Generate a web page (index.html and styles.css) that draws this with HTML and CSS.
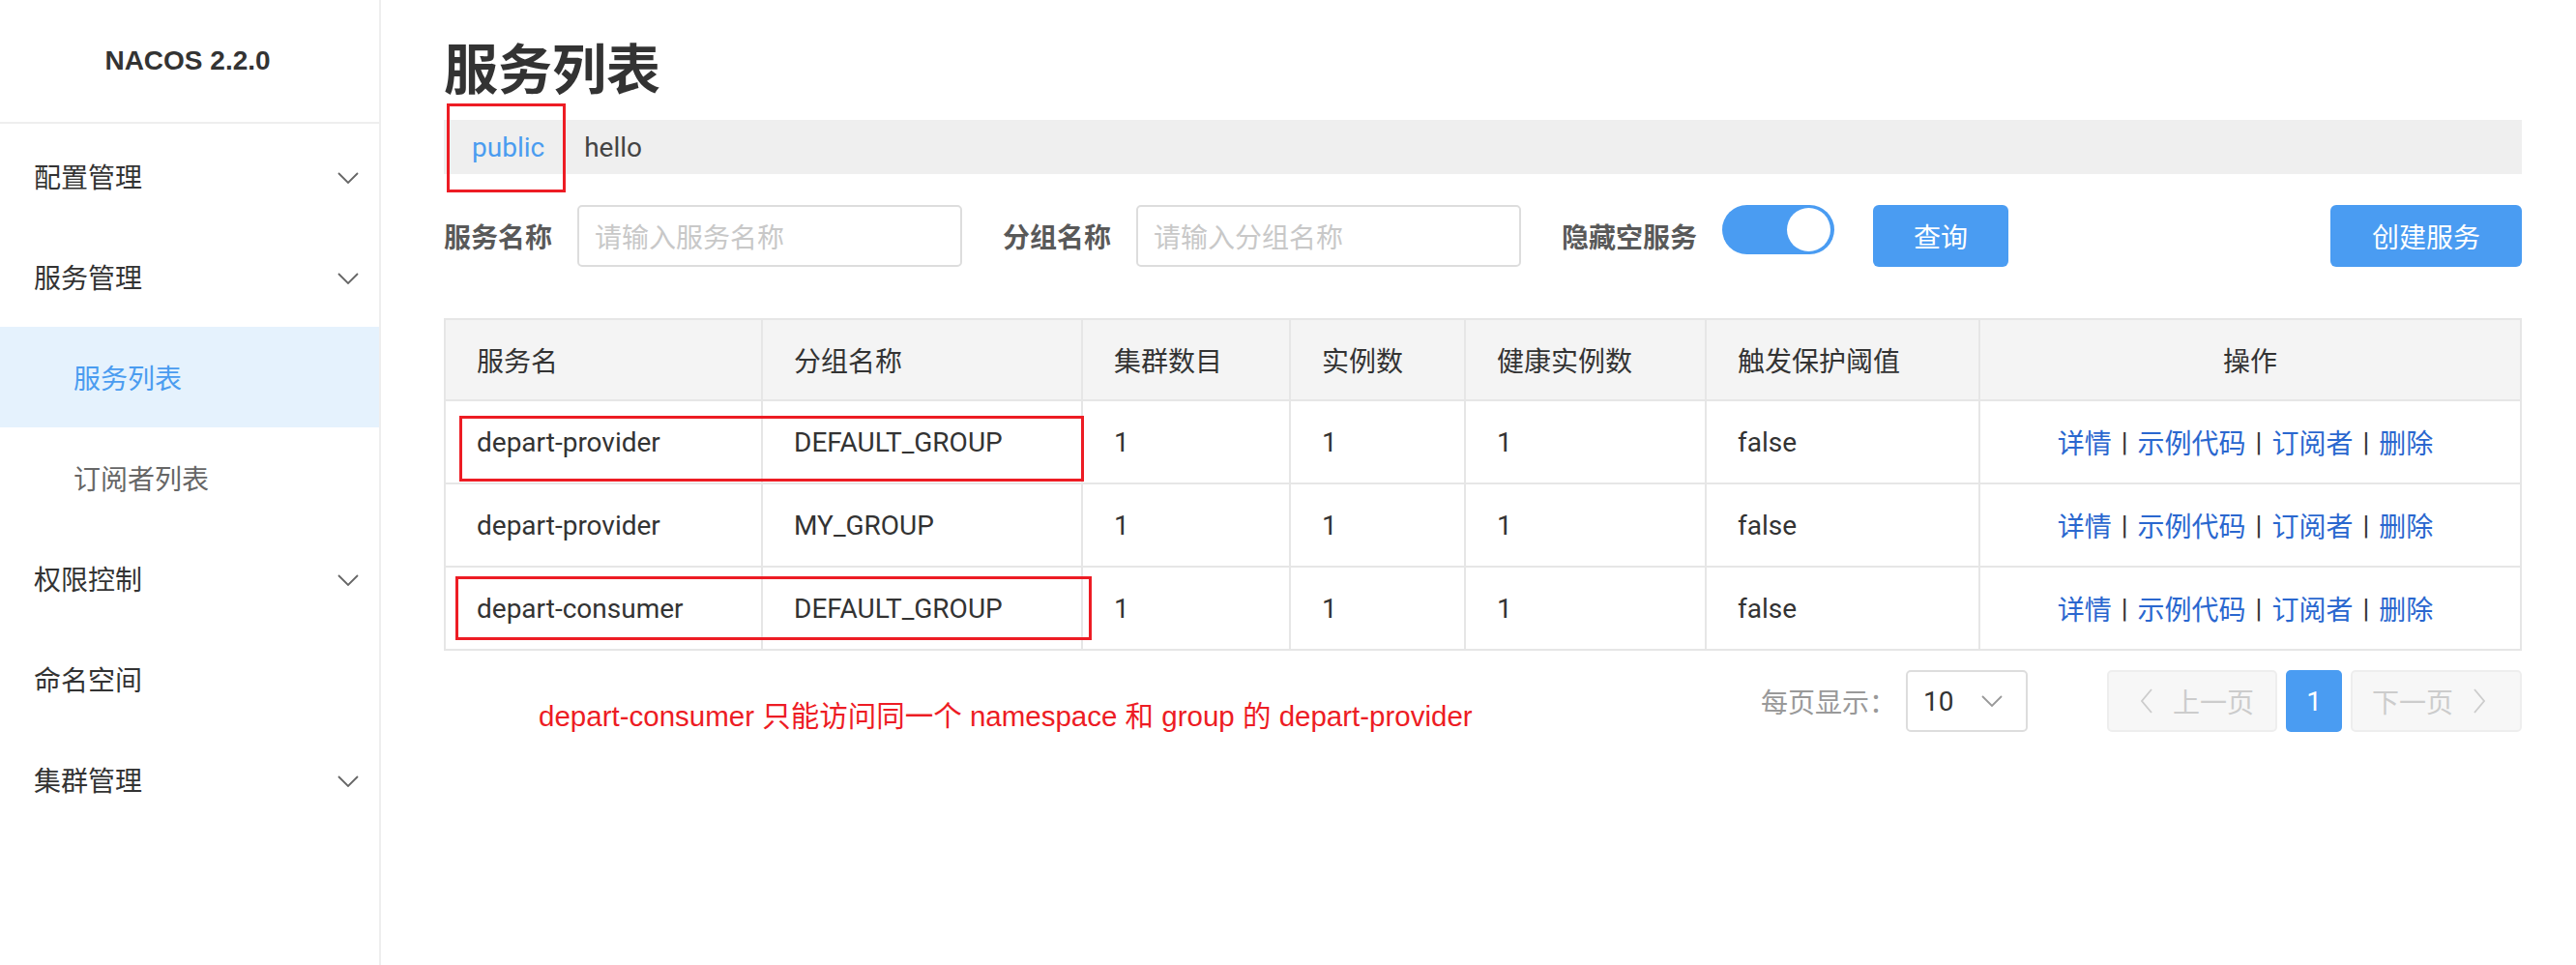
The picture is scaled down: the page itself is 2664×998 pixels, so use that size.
FILE: index.html
```html
<!DOCTYPE html>
<html lang="zh-CN">
<head>
<meta charset="utf-8">
<title>Nacos - 服务列表</title>
<link rel="stylesheet" href="styles.css">
</head>
<body>
<div class="app">
  <aside class="sidebar">
    <div class="brand">NACOS 2.2.0</div>
    <nav class="menu">
      <div class="menu-item"><span>配置管理</span><svg class="chev" viewBox="0 0 22 12"><polyline points="1,1 11,11 21,1"/></svg></div>
      <div class="menu-item"><span>服务管理</span><svg class="chev" viewBox="0 0 22 12"><polyline points="1,1 11,11 21,1"/></svg></div>
      <div class="menu-item sub active"><span>服务列表</span></div>
      <div class="menu-item sub"><span>订阅者列表</span></div>
      <div class="menu-item"><span>权限控制</span><svg class="chev" viewBox="0 0 22 12"><polyline points="1,1 11,11 21,1"/></svg></div>
      <div class="menu-item"><span>命名空间</span></div>
      <div class="menu-item"><span>集群管理</span><svg class="chev" viewBox="0 0 22 12"><polyline points="1,1 11,11 21,1"/></svg></div>
    </nav>
  </aside>
  <main class="main">
    <h1 class="title">服务列表</h1>
    <div class="ns-bar">
      <span class="ns ns-active">public</span>
      <span class="ns-sep"></span>
      <span class="ns">hello</span>
      <span class="mark mark-ns"></span>
    </div>
    <div class="filters">
      <label class="f-label">服务名称</label>
      <div class="input"><span class="ph">请输入服务名称</span></div>
      <label class="f-label gap-l">分组名称</label>
      <div class="input"><span class="ph">请输入分组名称</span></div>
      <label class="f-label gap-l">隐藏空服务</label>
      <div class="toggle"><span class="knob"></span></div>
      <button class="btn btn-query">查询</button>
      <button class="btn btn-create">创建服务</button>
    </div>
    <div class="table-wrap">
      <div class="grid">
        <div class="th">服务名</div>
        <div class="th">分组名称</div>
        <div class="th">集群数目</div>
        <div class="th">实例数</div>
        <div class="th">健康实例数</div>
        <div class="th">触发保护阈值</div>
        <div class="th center">操作</div>

        <div class="td">depart-provider</div>
        <div class="td">DEFAULT_GROUP</div>
        <div class="td">1</div>
        <div class="td">1</div>
        <div class="td">1</div>
        <div class="td">false</div>
        <div class="td center ops"><a>详情</a><span class="sep">|</span><a>示例代码</a><span class="sep">|</span><a>订阅者</a><span class="sep">|</span><a>删除</a></div>

        <div class="td">depart-provider</div>
        <div class="td">MY_GROUP</div>
        <div class="td">1</div>
        <div class="td">1</div>
        <div class="td">1</div>
        <div class="td">false</div>
        <div class="td center ops"><a>详情</a><span class="sep">|</span><a>示例代码</a><span class="sep">|</span><a>订阅者</a><span class="sep">|</span><a>删除</a></div>

        <div class="td">depart-consumer</div>
        <div class="td">DEFAULT_GROUP</div>
        <div class="td">1</div>
        <div class="td">1</div>
        <div class="td">1</div>
        <div class="td">false</div>
        <div class="td center ops"><a>详情</a><span class="sep">|</span><a>示例代码</a><span class="sep">|</span><a>订阅者</a><span class="sep">|</span><a>删除</a></div>
      </div>
      <span class="mark mark-r1"></span>
      <span class="mark mark-r3"></span>
    </div>
    <div class="footer">
      <div class="note">depart-consumer 只能访问同一个 namespace 和 group 的 depart-provider</div>
      <span class="ps-label">每页显示：</span>
      <div class="select"><span>10</span><svg class="sel-chev" viewBox="0 0 22 12"><polyline points="1,1 11,11 21,1"/></svg></div>
      <div class="pager">
        <div class="pg pg-prev"><svg class="pg-chev" viewBox="0 0 12 26"><polyline points="11,1 1,13 11,25"/></svg><span>上一页</span></div>
        <div class="pg-num">1</div>
        <div class="pg pg-next"><span>下一页</span><svg class="pg-chev" viewBox="0 0 12 26"><polyline points="1,1 11,13 1,25"/></svg></div>
      </div>
    </div>
  </main>
</div>
</body>
</html>
```

FILE: styles.css
```css
* { box-sizing: border-box; }
html, body { margin: 0; padding: 0; background: #fff; }
body {
  font-family: Roboto, "Noto Sans CJK SC", sans-serif;
  font-size: 28px;
  color: #333;
  overflow: hidden;
}
.app { display: flex; width: 2664px; height: 998px; }

/* sidebar */
.sidebar {
  width: 394px;
  flex: none;
  border-right: 2px solid #eeeeee;
  height: 998px;
}
.brand {
  height: 128px;
  line-height: 126px;
  border-bottom: 2px solid #eeeeee;
  text-align: center;
  padding-right: 4px;
  font-family: "Liberation Sans", "Noto Sans CJK SC", sans-serif;
  font-weight: bold;
  font-size: 28px;
  color: #333;
}
.menu { padding-top: 2px; }
.menu-item {
  height: 104px;
  display: flex;
  align-items: center;
  justify-content: space-between;
  padding: 0 21px 0 35px;
  font-family: "Noto Sans CJK SC", sans-serif;
  font-size: 28px;
  color: #333;
}
.menu-item.sub { padding-left: 76px; color: #666; }
.menu-item.active { background: #e5f2fd; color: #4a9cf0; }
.chev { width: 22px; height: 12px; margin-top: 4px; }
.chev polyline, .sel-chev polyline, .pg-chev polyline {
  fill: none;
  stroke: #666;
  stroke-width: 1.8;
}

/* main */
.main {
  flex: 1;
  padding: 40px 56px 0 65px;
  min-width: 0;
}
.title {
  margin: 0;
  height: 56px;
  line-height: 56px;
  font-size: 56px;
  font-weight: bold;
  font-family: "Noto Sans CJK SC", sans-serif;
  color: #333;
}
.ns-bar {
  position: relative;
  margin-top: 28px;
  height: 56px;
  background: #efefef;
  display: flex;
  align-items: center;
  padding-left: 29px;
}
.ns { font-size: 28px; color: #444; }
.ns-active { color: #4a9cf0; }
.ns-sep {
  width: 2px;
  height: 24px;
  background: #777;
  margin: 0 20px 0 19px;
}
.mark {
  position: absolute;
  border: 3px solid #ed1c24;
}
.mark-ns { left: 3px; top: -17px; width: 123px; height: 92px; }

.filters {
  margin-top: 32px;
  height: 64px;
  display: flex;
  align-items: center;
}
.f-label {
  font-family: "Noto Sans CJK SC", sans-serif;
  font-weight: bold;
  font-size: 28px;
  color: #595959;
  margin-right: 26px;
}
.gap-l { margin-left: 42px; }
.input {
  width: 398px;
  height: 64px;
  border: 2px solid #dddddd;
  border-radius: 5px;
  padding-left: 16px;
  display: flex;
  align-items: center;
}
.ph { color: #c8c8c8; font-size: 28px; font-family: "Noto Sans CJK SC", sans-serif; }
.toggle {
  align-self: flex-start;
  width: 116px;
  height: 51px;
  border-radius: 26px;
  background: #4a9cf2;
  display: flex;
  justify-content: flex-end;
  align-items: center;
  padding-right: 4px;
}
.knob { width: 45px; height: 45px; border-radius: 50%; background: #fff; }
.btn {
  height: 64px;
  border: none;
  border-radius: 6px;
  background: #4a9cf2;
  color: #fff;
  font-family: "Noto Sans CJK SC", sans-serif;
  font-size: 28px;
  padding: 0;
}
.btn-query { width: 140px; margin-left: 40px; }
.btn-create { width: 198px; margin-left: auto; }

/* table */
.table-wrap { position: relative; margin-top: 53px; }
.grid {
  display: grid;
  grid-template-columns: 328px 331px 215px 181px 249px 283px 1fr;
  border-top: 2px solid #e6e6e6;
  border-left: 2px solid #e6e6e6;
}
.th, .td {
  height: 84px;
  border-right: 2px solid #e6e6e6;
  border-bottom: 2px solid #e6e6e6;
  display: flex;
  align-items: center;
  padding-left: 32px;
  font-size: 28px;
  color: #333;
  white-space: nowrap;
}
.td { height: 86px; }
.th { background: #f4f4f4; font-family: "Noto Sans CJK SC", sans-serif; }
.center { justify-content: center; padding-left: 0; }
.ops { padding-right: 10px; }
.td a { color: #2a67cf; font-family: "Noto Sans CJK SC", sans-serif; }
.sep { color: #333; margin: 0 10px; font-family: Roboto, sans-serif; }
.mark-r1 { left: 16px; top: 101px; width: 646px; height: 68px; }
.mark-r3 { left: 12px; top: 267px; width: 658px; height: 66px; }

/* footer */
.footer {
  margin-top: 20px;
  height: 64px;
  display: flex;
  align-items: center;
}
.note {
  align-self: flex-start;
  margin: 33px 0 0 98px;
  line-height: 30px;
  font-family: "Liberation Sans", "Noto Sans CJK SC", sans-serif;
  font-size: 29.5px;
  color: #ed1c24;
  white-space: nowrap;
}
.ps-label {
  margin-left: auto;
  margin-right: 10px;
  color: #999;
  font-family: "Noto Sans CJK SC", sans-serif;
  font-size: 28px;
}
.select {
  width: 126px;
  height: 64px;
  border: 2px solid #dddddd;
  border-radius: 5px;
  display: flex;
  align-items: center;
  justify-content: space-between;
  padding: 0 24px 0 16px;
  color: #333;
}
.sel-chev { width: 22px; height: 12px; }
.sel-chev polyline { stroke: #999; }
.pager { display: flex; align-items: center; margin-left: 82px; gap: 9px; }
.pg {
  width: 176px;
  height: 64px;
  border: 2px solid #eeeeee;
  border-radius: 5px;
  background: #f7f7f7;
  display: flex;
  align-items: center;
  gap: 21px;
  color: #cccccc;
  font-family: "Noto Sans CJK SC", sans-serif;
  font-size: 28px;
}
.pg-prev { padding-left: 33px; }
.pg-next { width: 177px; padding-left: 20px; }
.pg-chev { width: 12px; height: 26px; }
.pg-chev polyline { stroke: #cccccc; }
.pg-num {
  width: 58px;
  height: 64px;
  border-radius: 5px;
  background: #4a9cf2;
  color: #fff;
  display: flex;
  align-items: center;
  justify-content: center;
  font-size: 28px;
}
```
